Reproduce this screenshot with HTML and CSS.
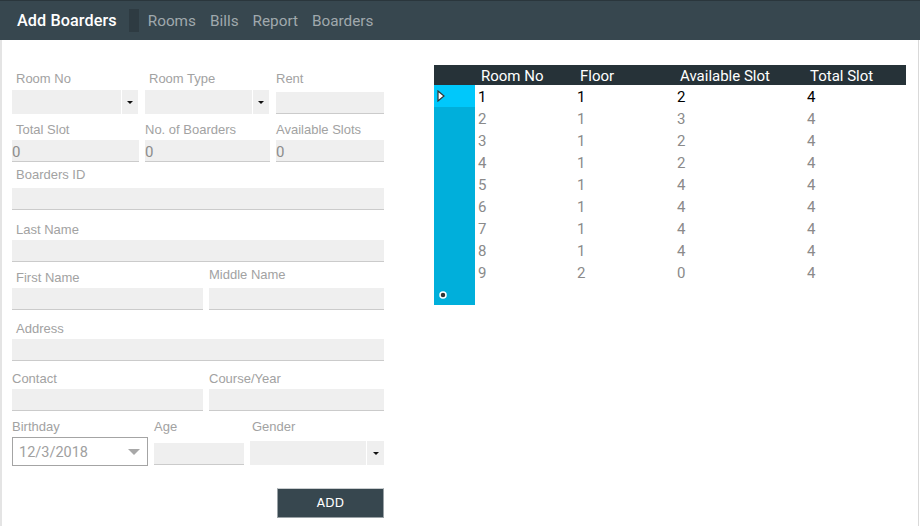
FILE: index.html
```html
<!DOCTYPE html>
<html>
<head>
<meta charset="utf-8">
<link rel="stylesheet" href="styles.css">
</head>
<body>
<div class="app">
  <header class="topbar">
    <span class="title">Add Boarders</span>
    <span class="sep"></span>
    <nav class="nav"><span>Rooms</span><span>Bills</span><span>Report</span><span>Boarders</span></nav>
  </header>
  <main class="main">
    <div class="form">
      <div class="row r1">
        <div class="cell w126"><div class="lbl ind">Room No</div><div class="combo"><span class="cbody"></span><span class="cbtn"><i class="caret"></i></span></div></div>
        <div class="cell w124"><div class="lbl ind">Room Type</div><div class="combo"><span class="cbody"></span><span class="cbtn"><i class="caret"></i></span></div></div>
        <div class="cell w108"><div class="lbl">Rent</div><div class="tb mt2"></div></div>
      </div>
      <div class="row r2">
        <div class="cell w127"><div class="lbl ind">Total Slot</div><div class="tb"><span class="val">0</span></div></div>
        <div class="cell w125"><div class="lbl">No. of Boarders</div><div class="tb"><span class="val">0</span></div></div>
        <div class="cell w108"><div class="lbl">Available Slots</div><div class="tb"><span class="val">0</span></div></div>
      </div>
      <div class="row r3">
        <div class="cell grow"><div class="lbl ind gap6">Boarders ID</div><div class="tb"></div></div>
      </div>
      <div class="row r4">
        <div class="cell grow"><div class="lbl ind">Last Name</div><div class="tb"></div></div>
      </div>
      <div class="row r5">
        <div class="cell w191"><div class="lbl ind low">First Name</div><div class="tb"></div></div>
        <div class="cell grow"><div class="lbl gap6">Middle Name</div><div class="tb"></div></div>
      </div>
      <div class="row r6">
        <div class="cell grow"><div class="lbl ind">Address</div><div class="tb"></div></div>
      </div>
      <div class="row r7">
        <div class="cell w191"><div class="lbl">Contact</div><div class="tb"></div></div>
        <div class="cell grow"><div class="lbl">Course/Year</div><div class="tb"></div></div>
      </div>
      <div class="row r8">
        <div class="cell w136"><div class="lbl">Birthday</div>
          <div class="date"><span class="dval">12/3/2018</span><i class="dcaret"></i></div>
        </div>
        <div class="cell w90"><div class="lbl">Age</div><div class="tb mt6"></div></div>
        <div class="cell grow"><div class="lbl ind2">Gender</div><div class="combo gcombo mt4"><span class="cbody"></span><span class="cbtn"><i class="caret"></i></span></div></div>
      </div>
      <div class="actions">
        <button class="add" type="button">ADD</button>
      </div>
    </div>

    <div class="grid">
      <table class="tbl">
        <thead>
          <tr><th class="rh"></th><th class="c1">Room No</th><th class="c2">Floor</th><th class="c3">Available Slot</th><th class="c4">Total Slot</th></tr>
        </thead>
        <tbody>
          <tr class="sel"><td class="rh cur"><svg width="8" height="12" viewBox="0 0 8 12"><polygon points="1,1 7,6 1,11" fill="#fff" stroke="#333" stroke-width="1.2"/></svg></td><td>1</td><td>1</td><td>2</td><td>4</td></tr>
          <tr><td class="rh"></td><td>2</td><td>1</td><td>3</td><td>4</td></tr>
          <tr><td class="rh"></td><td>3</td><td>1</td><td>2</td><td>4</td></tr>
          <tr><td class="rh"></td><td>4</td><td>1</td><td>2</td><td>4</td></tr>
          <tr><td class="rh"></td><td>5</td><td>1</td><td>4</td><td>4</td></tr>
          <tr><td class="rh"></td><td>6</td><td>1</td><td>4</td><td>4</td></tr>
          <tr><td class="rh"></td><td>7</td><td>1</td><td>4</td><td>4</td></tr>
          <tr><td class="rh"></td><td>8</td><td>1</td><td>4</td><td>4</td></tr>
          <tr><td class="rh"></td><td>9</td><td>2</td><td>0</td><td>4</td></tr>
          <tr class="newrow"><td class="rh"><svg width="10" height="10" viewBox="0 0 10 10"><circle cx="5" cy="5" r="3" fill="#333" stroke="#fff" stroke-width="1.5"/></svg></td><td></td><td></td><td></td><td></td></tr>
        </tbody>
      </table>
    </div>
  </main>
</div>
</body>
</html>
```

FILE: styles.css
```css
* { box-sizing: border-box; }
html, body { margin: 0; padding: 0; background: #fff; }
body { font-family: "Liberation Sans", Arial, sans-serif; }

.app {
  width: 920px;
  height: 526px;
  display: flex;
  flex-direction: column;
  overflow: hidden;
}

.topbar {
  height: 40px;
  flex: none;
  background: #37474f;
  border-top: 1px solid #2a363c;
  display: flex;
  align-items: center;
  padding-left: 17px;
  font-family: Roboto, "Liberation Sans", sans-serif;
}
.title {
  color: #fff;
  font-weight: 500;
  font-size: 16.2px;
  letter-spacing: 0.1px;
}
.sep {
  width: 10px;
  height: 23px;
  background: #2e3b42;
  margin-left: 12px;
  margin-right: 9px;
}
.nav { display: flex; gap: 14px; }
.nav span { color: #a0a9ad; font-size: 15.3px; }

.main {
  flex: 1;
  display: flex;
  align-items: flex-start;
  border-left: 2px solid #e4e4e4;
  border-right: 1px solid #d9d9d9;
  margin-right: 1px;
  padding-left: 10px;
}

/* form */
.form {
  width: 372px;
  flex: none;
  padding-top: 30px;
  display: flex;
  flex-direction: column;
}
.row { display: flex; gap: 6px; align-items: flex-start; }
.r1 { gap: 7px; }
.r2 { margin-top: 7px; }
.r3 { margin-top: 4px; }
.r4 { margin-top: 11px; }
.r5 { margin-top: 4px; }
.r6 { margin-top: 10px; }
.r7 { margin-top: 9px; }
.r8 { margin-top: 7px; }

.cell { display: flex; flex-direction: column; flex: none; }
.cell.grow { flex: 1; }
.w90 { width: 90px; }
.w108 { width: 108px; }
.w124 { width: 124px; }
.w125 { width: 125px; }
.w126 { width: 126px; }
.w127 { width: 127px; }
.w136 { width: 136px; }
.w191 { width: 191px; }

.lbl {
  font-size: 13px;
  line-height: 16px;
  padding-top: 1px;
  color: #a2a2a2;
  margin-bottom: 3px;
  white-space: nowrap;
  box-sizing: content-box;
  height: 15px;
}
.r1 .lbl { margin-bottom: 4px; }
.lbl.ind { padding-left: 4px; }
.lbl.ind2 { padding-left: 2px; }
.lbl.gap6 { margin-bottom: 6px; }
.lbl.low { padding-top: 4px; margin-bottom: 3px; height: 15px; }

.tb {
  height: 22px;
  background: #efefef;
  border-bottom: 1px solid #cbcbcb;
  display: flex;
  align-items: center;
}
.mt2 { margin-top: 2px; }
.mt4 { margin-top: 4px; }
.mt6 { margin-top: 6px; }
.val {
  font-family: Roboto, "Liberation Sans", sans-serif;
  font-size: 15px;
  color: #8c8c8c;
  padding-top: 2px;
}

.combo {
  height: 24px;
  display: flex;
  gap: 1px;
  background: #fff;
}
.cbody { flex: 1; background: #efefef; }
.cbtn {
  width: 16px;
  background: #efefef;
  display: flex;
  align-items: center;
  justify-content: center;
}
.gcombo .cbtn { width: 17px; }
.caret {
  width: 0; height: 0;
  border-left: 3px solid transparent;
  border-right: 3px solid transparent;
  border-top: 3px solid #111;
  margin-top: 1px;
}

.date {
  height: 29px;
  border: 1px solid #a4a4a4;
  background: #fff;
  display: flex;
  align-items: center;
  padding-left: 6px;
  padding-right: 6px;
  justify-content: space-between;
}
.dval {
  font-family: Roboto, "Liberation Sans", sans-serif;
  font-size: 14.5px;
  color: #a0a0a0;
  padding-top: 1px;
}
.dcaret {
  width: 0; height: 0;
  border-left: 6px solid transparent;
  border-right: 6px solid transparent;
  border-top: 6px solid #a8a8a8;
  margin-right: 1px;
}

.actions {
  margin-top: 22px;
  display: flex;
  justify-content: flex-end;
}
.add {
  width: 107px;
  height: 30px;
  background: #37474f;
  border: 1px solid #9aa2a6;
  border-top-color: #c9cdcf;
  color: #fff;
  font-family: "DejaVu Sans", "Liberation Sans", sans-serif;
  font-size: 12px;
  letter-spacing: 0.3px;
  padding: 0;
}

/* grid */
.grid {
  margin-left: 50px;
  margin-top: 25px;
}
.tbl {
  border-collapse: collapse;
  width: 472px;
  table-layout: fixed;
  font-family: Roboto, "Liberation Sans", sans-serif;
  font-size: 15px;
}
.tbl th, .tbl td { padding: 0; text-align: left; white-space: nowrap; }
.tbl th {
  height: 20px;
  background: #263238;
  color: #fff;
  font-weight: 400;
  padding-left: 6px;
  padding-top: 2px;
  line-height: 18px;
}
.tbl th.rh { width: 41px; }
.tbl th.c1 { width: 99px; }
.tbl th.c2 { width: 100px; }
.tbl th.c3 { width: 130px; }
.tbl th.c4 { width: 102px; }
.tbl td {
  height: 22px;
  color: #8a8a8a;
  padding-left: 3px;
  padding-top: 2px;
  line-height: 20px;
}
.tbl tr.sel td { color: #000; }
.tbl td.rh {
  background: #00afdb;
  padding-left: 3px;
  padding-top: 0;
  line-height: 0;
  vertical-align: middle;
}
.tbl td.cur { background: #00c8fb; }
.tbl tr.sel td.rh svg { display: block; margin-top: -1px; }
.tbl tr.newrow td.rh svg { display: block; margin-left: 1px; margin-top: 1px; }
```
